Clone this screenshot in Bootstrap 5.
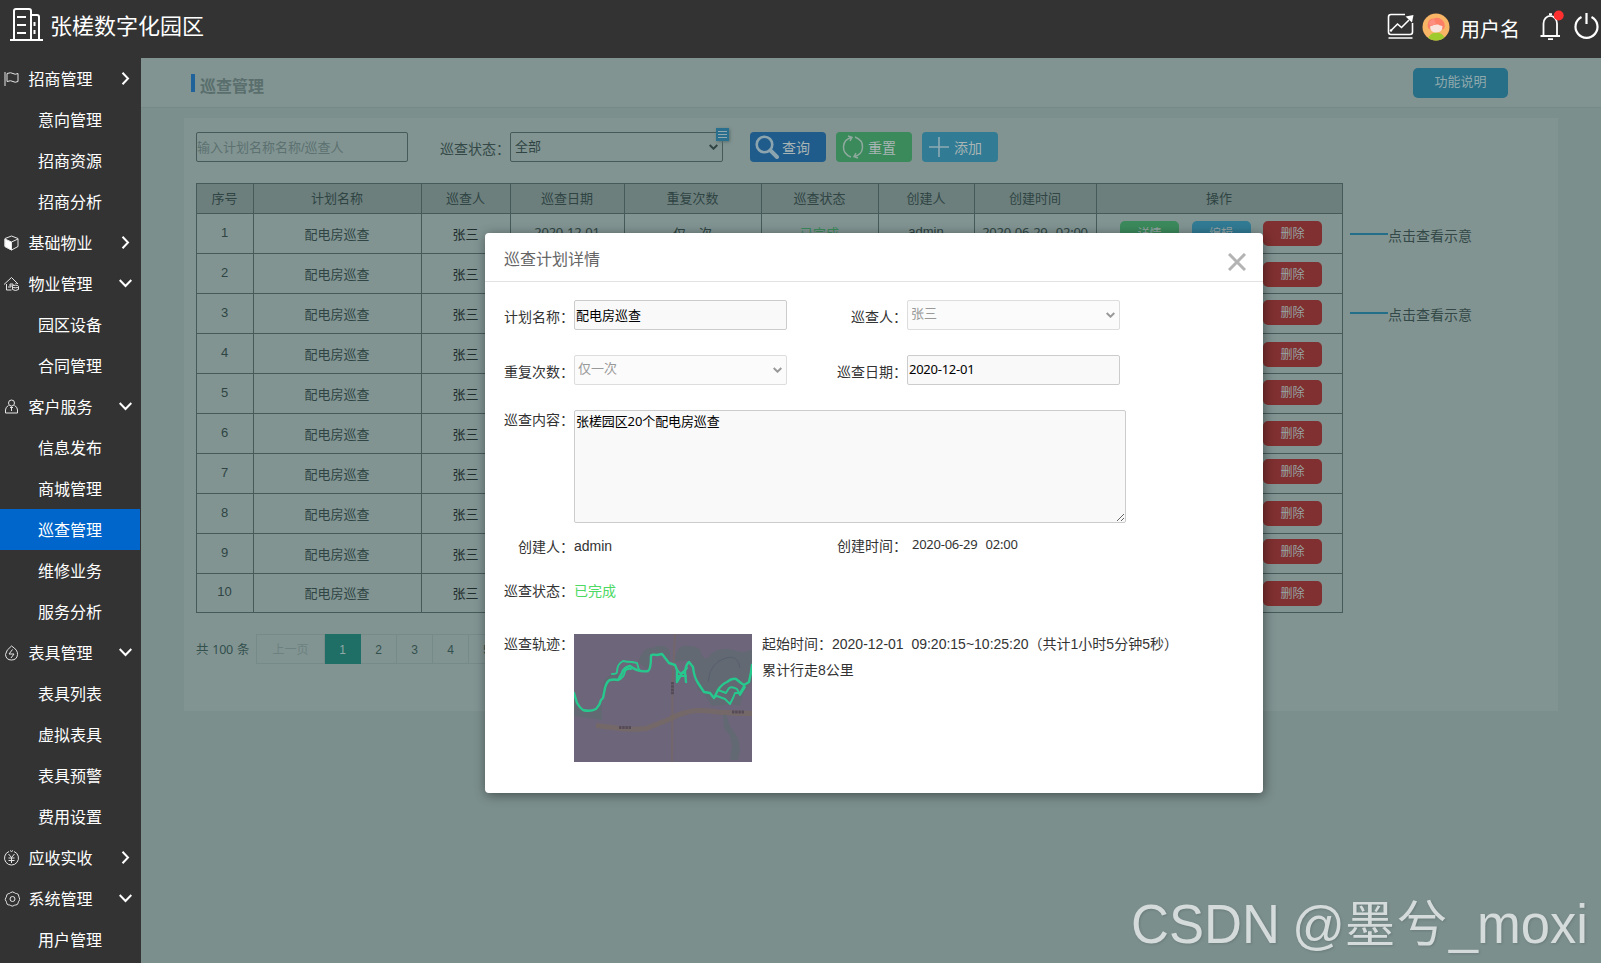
<!DOCTYPE html>
<html lang="zh-CN">
<head>
<meta charset="utf-8">
<meta name="viewport" content="width=device-width, initial-scale=1">
<title>张槎数字化园区 - 巡查管理</title>
<link href="https://cdn.jsdelivr.net/npm/bootstrap@5.3.0/dist/css/bootstrap.min.css" rel="stylesheet">
<style>
  :root { --ink:#2f4443; --line:#465b59; --panel:#819492; --canvas:#7b8f8d; }
  body { font-family:"Liberation Sans","Noto Sans CJK SC",sans-serif; font-size:14px; line-height:20px; background:var(--canvas); height:963px; overflow:hidden; }
  svg { display:block; flex:none; }
  .topbar { height:58px; background:#333; color:#fff; padding:0 1px 0 10px; }
  .brand-text { font-size:22px; line-height:30px; margin:-4px 0 0 7px; }
  .brand-mark { margin-top:-9px; }
  .tool-icon { margin-top:-5px; }
  .bell { margin:-8px 0 0 20px; }
  .user-text { font-size:20px; line-height:28px; padding-top:1px; margin-left:10px; }
  .side { width:141px; height:905px; background:#333; color:#fff; font-size:16px; overflow:hidden; flex:none; }
  .side-item { height:41px; width:140px; }
  .side-item span { padding-top:2px; }
  .side-group { padding-left:4px; }
  .side-group .lbl { margin-left:8.500px; width:90px; }
  .side-child { padding-left:38px; }
  .side-child.current { background:#06c; }
  .page-head { height:50px; background:var(--panel); border-bottom:1px solid #768a88; padding:0 93px 0 50px; }
  .page-title { border-left:4px solid #20639b; height:18px; font-size:16px; line-height:26px; font-weight:700; color:#5a6f6d; padding-left:5px; margin-top:1px; }
  .btn-note { width:95px; height:30px; background:#276e87; color:#8fa9ac; border:0; border-radius:5px; font-size:13px; padding:0 0 1px; }
  .panel { margin:10px 43px 0 43px; height:593px; background:var(--panel); padding:14px 0 0 12px; }
  .ctl { height:30px; width:213px; font-size:13px; line-height:18px; border-radius:2px; padding:0 3px 2px 1px; }
  .filter .ctl { background-color:transparent; border:1px solid var(--line); color:var(--ink); }
  .filter input.ctl { width:212px; padding-top:2px; padding-left:0; }
  .filter input::placeholder { color:#5c7170; opacity:1; }
  .form-select.ctl { padding-left:4px; background-size:9px 6px; background-position:right 4px center; --bs-form-select-bg-img:url("data:image/svg+xml,%3csvg xmlns='http://www.w3.org/2000/svg' viewBox='0 0 9 6'%3e%3cpath fill='none' stroke='%23304443' stroke-width='2' d='M.7 1l3.8 3.7L8.3 1'/%3e%3c/svg%3e"); }
  .filter .form-select.ctl { padding-top:1px; padding-bottom:1px; }
  .state-label { margin-left:32px; padding-top:7px; color:#344947; width:70px; }
  .note-flag { right:-6px; top:-4px; width:13px; height:13px; background:#2b6f8f; box-shadow:1px 1px 3px #5b6f6d; }
  .tool { width:76px; height:30px; border:0; border-radius:4px; color:#a9b5b4; font-size:14px; line-height:20px; padding:0; display:flex; align-items:center; }
  .tool span { padding-top:1px; }
  .grid-table { border-collapse:separate; border-spacing:0; table-layout:fixed; width:1147px; border-right:1px solid var(--line); border-bottom:1px solid var(--line); font-size:13px; color:var(--ink); text-align:center; }
  .grid-table th, .grid-table td { border-left:1px solid var(--line); border-top:1px solid var(--line); padding:0 1px 0 0; height:40px; }
  .grid-table tr:last-child td { height:39px; }
  .grid-table th { height:30px; background:#6c7f7d; font-weight:400; padding-top:1px; }
  .grid-table .ops { vertical-align:top; }
  .grid-table .who { color:#1f2e2d; }
  .grid-table .cn { padding-top:2px; }
  .grid-table .no { padding-bottom:2px; }
  .grid-table .up { padding-bottom:3px; }
  .num { font-family:"Noto Sans","Noto Sans CJK SC",sans-serif; font-size:13px; letter-spacing:-.25px; word-spacing:1px; white-space:pre; }
  .op { width:59px; height:25px; border-radius:5px; font-size:12px; line-height:26px; color:#97a5a4; }
  .callouts { padding:41px 0 0 7px; color:#344947; }
  .callout-row { height:24px; margin-bottom:55px; }
  .callout-row i { width:38px; height:2px; background:#236e89; margin-top:-4px; }
  .pager { margin-top:21px; font-size:13px; color:#33504d; }
  .pager .total { width:60px; font-size:12.500px; padding-top:1px; }
  .pager .cell { height:30px; border:1px solid #768a88; border-left-width:0; text-align:center; line-height:30px; font-size:12px; }
  .pager .prev { border-left-width:1px; color:#6d8280; }
  .pager .on { background:#1f6f66; border-color:#1f6f66; color:#8fa9a5; }
  .dialog { left:485px; top:233px; width:778px; height:560px; background:#fff; border-radius:4px; box-shadow:1px 2px 12px rgba(0,0,0,.45); color:#333; }
  .dialog-head { height:49px; border-bottom:1px solid #e2e2e2; padding:2px 17px 0 19px; font-size:16px; color:#666; }
  .dialog-head span { padding-top:4px; }
  .dialog-body { padding:18px 0 0 19px; }
  .fl { width:70px; text-align:right; flex:none; padding-top:7px; white-space:nowrap; }
  .dialog .ctl { border:1px solid #ccc; background-color:#f9f9f9; color:#000; }
  .dialog .form-select.ctl { color:#999; border-color:#ddd; background-color:#fbfbfb; padding-left:3px; --bs-form-select-bg-img:url("data:image/svg+xml,%3csvg xmlns='http://www.w3.org/2000/svg' viewBox='0 0 9 6'%3e%3cpath fill='none' stroke='%23999' stroke-width='2' d='M.7 1l3.8 3.7L8.3 1'/%3e%3c/svg%3e"); }
  .dialog textarea.ctl { width:552px; height:113px; padding:1px 0 0 1px; font-family:"Noto Sans","Noto Sans CJK SC",sans-serif; letter-spacing:-.1px; resize:both; min-height:0; }
  .form-line { height:55px; }
  .second { margin-left:50px; }
  .stamp { right:0; bottom:0; filter:drop-shadow(1px 1px 1px #6a7c7a); }
</style>
</head>
<body>
<header class="topbar d-flex align-items-center justify-content-between">
  <div class="d-flex align-items-center">
    <svg class="brand-mark" width="33" height="34" viewBox="0 0 33 34" fill="none" stroke="#fff" stroke-width="2"><path d="M0 32h33M4 32V3q0-2 2-2h13q2 0 2 2v29M21 7h6q2 0 2 2v23M7 9h9M7 17h9M7 25h9M24.500 14v4M24.500 22v4"/></svg>
    <div class="brand-text">张槎数字化园区</div>
  </div>
  <div class="d-flex align-items-center">
    <svg class="tool-icon" width="27" height="27" viewBox="0 0 27 27" fill="none" stroke="#fff" stroke-width="1.600"><path d="M18 1.500H4q-2.500 0-2.500 2.500v15q0 2.500 2.500 2.500h19q2.500 0 2.500-2.500V10M1.500 25h24M4 17.500L10.500 11l4 3.500L22 7"/><circle cx="4" cy="17.500" r="1.200" fill="#fff" stroke="none"/><path d="M18.500 3.500L26.500 2l-1.500 7.500z" fill="#fff" stroke="none"/></svg>
    <svg class="tool-icon ms-2" width="28" height="28" viewBox="0 0 28 28"><defs><clipPath id="face"><circle cx="14" cy="14" r="13.500"/></clipPath></defs><g clip-path="url(#face)"><path fill="#f8b566" d="M0 0h28v28H0z"/><ellipse cx="14.500" cy="27" rx="8.500" ry="7.500" fill="#9fcb2e"/><path d="M5.500 12.500Q6 5 12 5.500q3-1.500 7 .500 4 2.500 3.800 7.500-.500 3-2.800 3H9q-3 0-3.500-4" fill="#fd7f66"/><path d="M8 13.500q5-2.500 8-2 2 1 4.500 1.500 0 6.500-6.200 6.500T8 13.500" fill="#f9e4dd"/><path d="M7 11q0-4 5-5l2 5-5 2z" fill="#fc8f80"/></g></svg>
    <div class="user-text">用户名</div>
    <svg class="bell" width="25" height="31" viewBox="0 0 25 31" fill="none" stroke="#fff" stroke-width="1.800"><path d="M.500 26h19.500M3.500 25V13.500a6.700 7.500 0 0 1 13.500 0V25M8 29.200h5M9 4.200h3"/><circle cx="18.700" cy="5.500" r="5" fill="#ff2f2f" stroke="none"/></svg>
    <svg class="tool-icon ms-2" width="27" height="27" viewBox="-1 0 27 27" fill="none" stroke="#fff" stroke-width="2.200"><path d="M12.500 0v11M7.500 4a11 11 0 1 0 10 0"/></svg>
  </div>
</header>

<div class="d-flex">
  <nav class="side" id="side"></nav>
  <main class="flex-grow-1">
    <div class="page-head d-flex align-items-center justify-content-between">
      <div class="page-title">巡查管理</div>
      <button class="btn-note">功能说明</button>
    </div>
    <section class="panel">
      <div class="filter d-flex">
        <input class="form-control ctl" placeholder="输入计划名称名称/巡查人">
        <div class="state-label">巡查状态：</div>
        <div class="position-relative">
          <select class="form-select ctl"><option>全部</option></select>
          <span class="note-flag position-absolute"><svg width="13" height="13" viewBox="0 0 13 13" stroke="#93a9ad"><path d="M2 3.500h9M2 6.500h9M2 9.500h9"/></svg></span>
        </div>
        <div class="d-flex" style="gap:10px;margin-left:27px">
          <button class="tool" style="background:#1f5b8b"><svg width="24" height="24" viewBox="0 0 24 24" fill="none" stroke="#8ca4ae" style="margin:0 3px 0 5px"><circle cx="9.500" cy="9.500" r="7.800" stroke-width="2.600"/><path d="M15.500 15.500L22 22" stroke-width="4" stroke-linecap="round"/></svg><span>查询</span></button>
          <button class="tool" style="background:#3b8a5c"><svg width="22" height="24" viewBox="0 0 22 24" fill="none" stroke="#8fa99e" stroke-width="1.500" style="margin:0 4px 0 6px"><path d="M9 22Q1 19 1.500 11.500 2 4 10 2.500M13 2q8 3 7.500 10.500Q20 20 12 21.500M6 1l4 1.500L8 6M16 23l-4-1.500 2-3.500"/></svg><span>重置</span></button>
          <button class="tool" style="background:#317b94"><svg width="20" height="20" viewBox="0 0 20 20" stroke="#8fabb3" stroke-width="1.600" style="margin:0 5px 0 7px"><path d="M10 0v20M0 10h20"/></svg><span>添加</span></button>
        </div>
      </div>
      <div class="d-flex" style="margin-top:21px">
        <table class="grid-table">
          <colgroup><col style="width:57px"><col style="width:168px"><col style="width:89px"><col style="width:114px"><col style="width:137px"><col style="width:117px"><col style="width:96px"><col style="width:122px"><col></colgroup>
          <thead><tr><th>序号</th><th>计划名称</th><th>巡查人</th><th>巡查日期</th><th>重复次数</th><th>巡查状态</th><th>创建人</th><th>创建时间</th><th>操作</th></tr></thead>
          <tbody id="rows"></tbody>
        </table>
        <div class="callouts">
          <div class="callout-row d-flex align-items-center"><i></i><span>点击查看示意</span></div>
          <div class="callout-row d-flex align-items-center"><i></i><span>点击查看示意</span></div>
        </div>
      </div>
      <div class="pager d-flex align-items-center">
        <div class="total num">共 100 条</div>
        <div class="cell prev" style="width:69px">上一页</div>
        <div class="cell on" style="width:36px">1</div>
        <div class="cell" style="width:36px">2</div><div class="cell" style="width:36px">3</div><div class="cell" style="width:36px">4</div><div class="cell" style="width:36px">5</div>
      </div>
    </section>
  </main>
</div>

<div class="dialog position-absolute">
  <div class="dialog-head d-flex align-items-center justify-content-between"><span>巡查计划详情</span>
    <svg width="18" height="18" viewBox="0 0 18 18" stroke="#b3b3b3" stroke-width="3" style="margin-top:8px"><path d="M1 1l16 16M17 1L1 17"/></svg>
  </div>
  <div class="dialog-body">
    <div class="form-line d-flex"><div class="fl">计划名称：</div><input class="form-control ctl" value="配电房巡查"><div class="fl second">巡查人：</div><select class="form-select ctl" disabled><option>张三</option></select></div>
    <div class="form-line d-flex"><div class="fl">重复次数：</div><select class="form-select ctl" disabled><option>仅一次</option></select><div class="fl second">巡查日期：</div><input class="form-control ctl num" value="2020-12-01"></div>
    <div class="d-flex" style="height:126px"><div class="fl pt-0">巡查内容：</div><textarea class="form-control ctl">张槎园区20个配电房巡查</textarea></div>
    <div class="d-flex" style="height:45px"><div class="fl" style="padding-top:1px">创建人：</div><div style="width:213px">admin</div><div class="fl second pt-0">创建时间：</div><div class="num" style="margin:-2px 0 0 5px">2020-06-29  02:00</div></div>
    <div class="d-flex" style="height:53px"><div class="fl pt-0">巡查状态：</div><div style="color:#4cd964">已完成</div></div>
    <div class="d-flex"><div class="fl pt-0">巡查轨迹：</div>
      <svg width="178" height="128" viewBox="0 0 178 128" fill="none">
        <defs><filter id="soft"><feGaussianBlur stdDeviation=".6"/></filter></defs>
        <path fill="#6d657a" d="M0 0h178v128H0z"/>
        <g filter="url(#soft)">
          <g fill="#626973"><path d="M0 60q4 16 16 18 8-2 12-12v20L0 82zM28 60q0-16 10-20l6 0 2 8-10 0-6 12zM64 28Q70 12 78 14q14-6 18 4l0 12-8-8-10 0-4 14zM101 28q0-18 14-16 12 0 12 8 6 8 8 2 10-10 24-6 10 4 19 0v32q-4 6-8 10l-4 14-10-2-18 2-8-12-6-4-8-28-3-2z"/><path d="M149 80l3 0 4 12 8 12 2 12-2 10h-8l2-14-2-10-6-8z"/></g>
          <path stroke="#58606e" stroke-width="1" d="M134 48q2-20 18-24 12-4 14 10"/>
          <path stroke="#76685f" stroke-opacity=".6" stroke-width="2" d="M101 0l-2.500 48L98 128"/>
          <path stroke="#776961" stroke-opacity=".75" stroke-width="5" d="M22 91.500l24 3q14 1.500 26 0l24-9.500q12-7 26-8.500 10-.500 22 1.500 18 1.500 34 1.500"/>
          <path stroke="#564c58" stroke-width="3" stroke-dasharray="2.500 .7" d="M45 93.500h12M158 78h12M98.500 48v13"/>
          <g stroke="#28c88e" stroke-linejoin="round" stroke-linecap="round">
            <path stroke-width="2.400" d="M0 59l3 10q3 5 6 7 7 2 13-1 4-4 5-9l2-2 2-10q2-7 5-8 4-1 8 0l4-7q2-6 8-7 4 3 7 4 6 2 11 1 3-2 3-15 0-2 6-1l5-1 7 9 6 2 2 5 0 12 5-9 3-1 1 10-1-10q1-8 4-10l4 5q1 10 5 16l6 9 6 1 4 5 4-8q4-6 9-8 5-4 9-3l5 4 3 2 5-3q2-8 3-17"/>
            <path stroke-width="1.900" d="M38 40q5 0 5-2 0-8 6-11 4 1 9 1l5 1 2 7M44 46q6-2 7-9 2-3 6-2M140 63l3-1 8 3 5 5 3-6 2-5 5 0 4-7M144 56l8 3 3-5q3-2 8 1l3 6 5-8M103 36l4 4 6-6M103 42h9"/>
          </g>
        </g>
      </svg>
      <div style="margin-left:10px"><div style="white-space:pre">起始时间：2020-12-01  09:20:15~10:25:20（共计1小时5分钟5秒）</div><div style="margin-top:6px">累计行走8公里</div></div>
    </div>
  </div>
</div>

<svg class="stamp position-absolute" width="480" height="80" viewBox="0 0 480 80" fill="#d5dbdb">
  <g font-family="'Liberation Sans',sans-serif" font-size="55">
    <text x="10" y="59.500" textLength="149" lengthAdjust="spacingAndGlyphs">CSDN</text>
    <text x="171" y="59.500" textLength="53" lengthAdjust="spacingAndGlyphs" font-size="52">@</text>
    <text x="328" y="59.500" textLength="29" lengthAdjust="spacingAndGlyphs" font-size="50">_</text>
    <text x="356" y="59.500" textLength="111" lengthAdjust="spacingAndGlyphs">moxi</text>
  </g>
  <g font-family="'Noto Sans CJK SC',sans-serif" font-size="50"><text x="224" y="59">墨</text><text x="276" y="59">兮</text></g>
</svg>

<script src="https://cdn.jsdelivr.net/npm/bootstrap@5.3.0/dist/js/bootstrap.bundle.min.js"></script>
<script>
  const icons = {
    flag: '<path d="M1 1v14M3 2.500q4-1.500 6 0t5 0v8q-3 1.500-5 0t-6 0z"/>',
    cube: '<path d="M7.500 1L14 3.500v8L7.500 15 1 11.500v-8z"/><path d="M1 4l6.500 3v8L1 11.500z" fill="#fff"/><path d="M7.500 7L14 4"/>',
    house: '<path d="M0 8.500L7.500 1.500 14 8M2.500 8v6h5M6 8h3v2H6zM12 7v1"/><ellipse cx="11.500" cy="10.500" rx="3" ry="1.300"/><path d="M8.500 10.500v3q3 2 6 0v-3M4 11h3"/>',
    person: '<circle cx="7.500" cy="4" r="3"/><path d="M4.500 6.500Q1.500 8 1.500 11v3h12v-3q0-3-3-4.500M7.500 7.500V12M6 8.500h3"/>',
    drop: '<path d="M7.500 1Q14 5 13.500 9.500 13 15 7.500 15T1.500 9.500Q2 5 7.500 1zM8.500 4.500L5 9h5l-3 4"/>',
    yen: '<path d="M5 1.500a7 7 0 1 0 5 0M4.500 4l3 3.500 3-3.500M4.500 8h6M4.500 10.500h6M7.500 7.500V13M6 .500l1.500 1L9 .500"/>',
    gear: '<circle cx="8.500" cy="8" r="2.500"/><path d="M6.300 1.800Q8.500 0 10.700 1.800q.700.800 1.800.700 2.300.300 2.300 2.700 0 1 .600 1.700 1 2-.600 3.300-.700.700-.600 1.700-.500 2.200-2.500 2.100-1.100-.100-1.800.600-1.800 1.100-3.200-.100-.800-.700-1.900-.500-2.200-.300-2.200-2.300.100-1-.700-1.700-1.300-1.700 0-3.300.700-.700.600-1.700.400-2.400 2.400-2.500 1 0 1.400-.700z"/>'
  };
  const menu = [
    ['flag','招商管理',0,['意向管理','招商资源','招商分析']],
    ['cube','基础物业',0,[]],
    ['house','物业管理',1,['园区设备','合同管理']],
    ['person','客户服务',1,['信息发布','商城管理','巡查管理','维修业务','服务分析']],
    ['drop','表具管理',1,['表具列表','虚拟表具','表具预警','费用设置']],
    ['yen','应收实收',0,[]],
    ['gear','系统管理',1,['用户管理']]
  ];
  document.getElementById('side').innerHTML = menu.map(([icon, name, open, kids]) =>
    `<div class="side-item side-group d-flex align-items-center"><svg width="16" height="16" viewBox="0 0 16 16" fill="none" stroke="#e6e6e6" stroke-width="1">${icons[icon]}</svg><span class="lbl">${name}</span><svg width="13" height="13" viewBox="0 0 13 13" fill="none" stroke="#fff" stroke-width="2"><path d="${open ? 'M.7 3l5.800 6 5.800-6' : 'M3.500 .7L9 6.500 3.500 12.300'}"/></svg></div>` +
    kids.map(k => `<div class="side-item side-child d-flex align-items-center${k === '巡查管理' ? ' current' : ''}"><span>${k}</span></div>`).join('')
  ).join('');

  const offsets = [7, 8, 6, 8, 6, 7, 5, 7, 5, 7];
  document.getElementById('rows').innerHTML = offsets.map((top, i) =>
    `<tr><td class="no">${i + 1}</td><td class="cn">配电房巡查</td><td class="cn who">张三</td><td class="num up">2020-12-01</td><td>仅一次</td><td style="color:#3b8a5c">已完成</td><td class="up">admin</td><td class="num up">2020-06-29  02:00</td>
     <td class="ops"><div class="d-flex" style="padding:${top}px 0 0 23px;gap:12.500px"><div class="op" style="background:#3b8a5c">详情</div><div class="op" style="background:#317b94">编辑</div><div class="op" style="background:#803030">删除</div></div></td></tr>`
  ).join('');
</script>
</body>
</html>
